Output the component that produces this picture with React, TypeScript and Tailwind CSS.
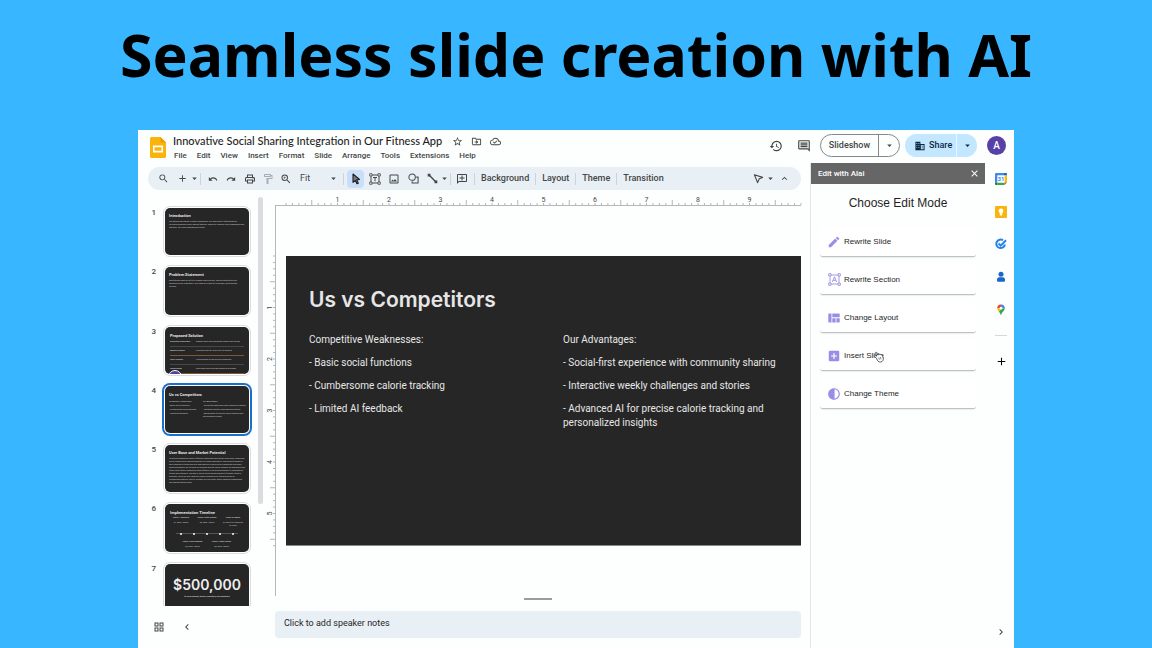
import type { ReactNode } from "react";
import {
  MdAdd,
  MdAddBox,
  MdArrowDropDown,
  MdChevronLeft,
  MdChevronRight,
  MdClose,
  MdContrast,
  MdCreate,
  MdExpandLess,
  MdHistory,
  MdOutlineAddComment,
  MdOutlineCloudDone,
  MdOutlineComment,
  MdOutlineDriveFileMove,
  MdOutlineFormatPaint,
  MdOutlineGridView,
  MdOutlineImage,
  MdOutlinePrint,
  MdRedo,
  MdSearch,
  MdStarBorder,
  MdUndo,
  MdZoomIn,
} from "react-icons/md";

const menus = ["File", "Edit", "View", "Insert", "Format", "Slide", "Arrange", "Tools", "Extensions", "Help"];

function ToolButton({ label, className = "", children }: { label: string; className?: string; children: ReactNode }) {
  return (
    <button aria-label={label} className={`flex shrink-0 items-center justify-center ${className}`}>
      {children}
    </button>
  );
}

function Divider() {
  return <span className="h-3 w-px shrink-0 bg-[#cdd3d9]" />;
}

function SlidesLogo() {
  return (
    <svg viewBox="0 0 16 21" className="h-[21px] w-4 shrink-0" aria-hidden="true">
      <path d="M1.500 0H10.500L16 5.500V19.500A1.500 1.500 0 0 1 14.500 21H1.500A1.500 1.500 0 0 1 0 19.500V1.500A1.500 1.500 0 0 1 1.500 0Z" fill="#fbb40b" />
      <path d="M10.500 0L16 5.500H10.500Z" fill="#f09a00" />
      <path d="M3 8.500H13V15.500H3ZM4.500 10.300V13.700H11.500V10.300Z" fill="#fff" fillRule="evenodd" />
    </svg>
  );
}

function Header() {
  return (
    <header className="flex h-[33px] shrink-0 items-start pr-2 pl-3 text-[#444746]">
      <div className="pt-[7px]">
        <SlidesLogo />
      </div>
      <div className="ml-[7px] pt-1">
        <div className="flex h-[14px] items-center">
          <h2 className="font-[Lato,sans-serif] text-[11px] leading-[14px] font-medium whitespace-nowrap text-[#1f1f1f]">
            Innovative Social Sharing Integration in Our Fitness App
          </h2>
          <button aria-label="Star" className="ml-[10px]"><MdStarBorder size={11} /></button>
          <button aria-label="Move" className="ml-2"><MdOutlineDriveFileMove size={11} /></button>
          <button aria-label="Saved to Drive" className="ml-2"><MdOutlineCloudDone size={11} /></button>
        </div>
        <nav className="flex h-4 items-center gap-[10px] pl-px text-[8px] font-medium">
          {menus.map((m) => (
            <button key={m}>{m}</button>
          ))}
        </nav>
      </div>
      <div className="ml-auto flex items-center pt-1">
        <button aria-label="Version history"><MdHistory size={14} /></button>
        <button aria-label="Comments" className="ml-[14px]"><MdOutlineComment size={14} /></button>
        <div className="ml-[9px] flex h-[23px] w-20 rounded-full border border-[#85888b]">
          <button className="flex-1 border-r border-[#85888b] text-[9px] font-medium">Slideshow</button>
          <button aria-label="Slideshow options" className="flex w-5 items-center justify-center"><MdArrowDropDown size={11} /></button>
        </div>
        <div className="ml-[5px] flex h-[23px] w-[72px] rounded-full bg-[#c2e7ff] text-[#0b2a44]">
          <button className="flex flex-1 items-center gap-1 border-r border-[#e8f6ff] pl-[10px] text-[9px] font-medium">
            <svg viewBox="0 0 12 12" width="10" height="10" fill="currentColor" aria-hidden="true">
              <path d="M.5 1H6.500V3.500H11.500V11H.5ZM7 4.700V9.800H10.300V4.700ZM1.700 2.500V3.500H2.700V2.500ZM4.200 2.500V3.500H5.200V2.500ZM1.700 5V6H2.700V5ZM4.200 5V6H5.200V5ZM1.700 7.500V8.500H2.700V7.500ZM4.200 7.500V8.500H5.200V7.500Z" fillRule="evenodd" />
              <path d="M8 5.700H9.300V6.700H8ZM8 7.800H9.300V8.800H8Z" />
            </svg>
            Share
          </button>
          <button aria-label="Share options" className="flex w-5 items-center justify-center"><MdArrowDropDown size={11} /></button>
        </div>
        <button className="ml-[10px] h-[19px] w-[19px] rounded-full bg-[#5642a6] text-[10px] font-medium text-white">A</button>
      </div>
    </header>
  );
}

function Toolbar() {
  return (
    <div className="mt-1 mr-[9px] ml-[10px] flex h-[23px] shrink-0 items-center rounded-full bg-[#e9f0f5] text-[#444746]">
      <ToolButton label="Search" className="ml-[9px] w-3"><MdSearch size={11} /></ToolButton>
      <ToolButton label="New slide" className="ml-[7px] w-3"><MdAdd size={11} /></ToolButton>
      <ToolButton label="New slide options" className="w-3"><MdArrowDropDown size={11} /></ToolButton>
      <Divider />
      <ToolButton label="Undo" className="ml-[6px] w-3"><MdUndo size={10} /></ToolButton>
      <ToolButton label="Redo" className="ml-[6px] w-3"><MdRedo size={10} /></ToolButton>
      <ToolButton label="Print" className="ml-[7px] w-3"><MdOutlinePrint size={12} /></ToolButton>
      <ToolButton label="Paint format" className="ml-[6px] w-3 text-[#a9adb1]"><MdOutlineFormatPaint size={12} /></ToolButton>
      <ToolButton label="Zoom" className="ml-[6px] w-3"><MdZoomIn size={12} /></ToolButton>
      <button className="ml-2 flex w-[39px] items-center justify-between text-[9px]">Fit<MdArrowDropDown size={11} /></button>
      <span className="w-1" />
      <Divider />
      <ToolButton label="Select" className="ml-[3px] h-[18px] w-[17px] rounded-sm bg-[#c9defa]">
        <svg viewBox="0 0 12 12" width="12" height="12"><path d="M3 1L9.500 6.500L6.800 6.900L8.300 10.200L6.900 10.800L5.400 7.500L3 9.300Z" fill="#777b80" stroke="#1f1f1f" strokeWidth="1.100" strokeLinejoin="round" /></svg>
      </ToolButton>
      <ToolButton label="Text box" className="ml-[5px] w-3">
        <svg viewBox="0 0 12 12" width="12" height="12" fill="none" stroke="currentColor"><path d="M2 2H10V10H2Z" /><path d="M.7.700H3V3H.7ZM9 .7H11.300V3H9ZM.7 9H3V11.300H.7ZM9 9H11.300V11.300H9Z" fill="#e9f0f5" strokeWidth=".8" /><path d="M4 4.500H8M6 4.500V8.300" /></svg>
      </ToolButton>
      <ToolButton label="Image" className="ml-[7px] w-3"><MdOutlineImage size={12} /></ToolButton>
      <ToolButton label="Shape" className="ml-[7px] w-3">
        <svg viewBox="0 0 12 12" width="11" height="11" fill="none" stroke="currentColor" strokeWidth="1.100"><circle cx="4.500" cy="4.500" r="3.500" /><path d="M9 4.500H11V11H4.500V9" /></svg>
      </ToolButton>
      <ToolButton label="Line" className="ml-[7px] w-3">
        <svg viewBox="0 0 12 12" width="11" height="11" fill="none" stroke="currentColor" strokeWidth="1.500"><path d="M2 2L10 10" /><path d="M1.500 1.500H3V3H1.500ZM9 9H10.500V10.500H9Z" /></svg>
      </ToolButton>
      <ToolButton label="Line options" className="w-3"><MdArrowDropDown size={11} /></ToolButton>
      <Divider />
      <ToolButton label="Comment" className="ml-[5px] w-3"><MdOutlineAddComment size={12} className="-scale-x-100" /></ToolButton>
      <span className="w-[6px]" />
      <Divider />
      <div className="flex items-center gap-[6px] pl-[6px] text-[9px] font-medium">
        <button>Background</button>
        <Divider />
        <button>Layout</button>
        <Divider />
        <button>Theme</button>
        <Divider />
        <button>Transition</button>
      </div>
      <ToolButton label="Pointer mode" className="ml-auto w-3">
        <svg viewBox="0 0 12 12" width="11" height="11" fill="none" stroke="currentColor" strokeWidth="1.200"><path d="M1.500 2L10.500 4.800L6.800 6.300L5 10.500Z" strokeLinejoin="round" /></svg>
      </ToolButton>
      <ToolButton label="Pointer options" className="w-3"><MdArrowDropDown size={11} /></ToolButton>
      <ToolButton label="Hide the menus" className="mr-[11px] ml-[2px] w-3"><MdExpandLess size={11} /></ToolButton>
    </div>
  );
}

function Solution() {
  const rows = [
    ["Connected Challenges", "Engage users with challenges shared with friends"],
    ["Machine Guided", "Personal plans for every level of workout"],
    ["Share Content", "Post progress to stories and community"],
    ["Add Rewards", "Encourage users through badges and streaks"],
  ];
  return (
    <div className="flex h-full flex-col px-[5px] pt-[6px]">
      <p className="text-[4px] leading-[5px] font-semibold">Proposed Solution</p>
      {rows.map(([a, b], i) => (
        <div key={a} className={`flex h-[9px] shrink-0 items-center border-b text-[2px] leading-[3px] text-[#ccc] ${i % 2 ? "border-[#80572e]" : "border-[#484848]"}`}>
          <b className="w-[26px]">{a}</b>
          <span>{b}</span>
        </div>
      ))}
      <span className="absolute -bottom-[10px] left-[3px] h-[14px] w-[14px] rounded-full border border-white bg-[#5642a6]" />
    </div>
  );
}

function Timeline() {
  return (
    <div className="px-[5px] pt-[6px] text-center text-[2px] leading-[3px] text-[#ccc]">
      <p className="text-left text-[4px] leading-[5px] font-semibold text-[#eee]">Implementation Timeline</p>
      <div className="mt-px grid grid-cols-3 gap-x-1"><b>Phase 1 Research</b><b>Phase 3 Beta Testing</b><b>Phase 5 Launch</b></div>
      <div className="mt-[2px] grid h-[7px] grid-cols-3 gap-x-1"><span>Q1 2025 - March</span><span>Q3 2025 - March</span><span>Q4 2025 full release to all users</span></div>
      <div className="mx-[6px] my-1 flex h-[3px] items-center justify-between bg-[linear-gradient(#555,#555)] bg-[length:100%_1px] bg-center bg-no-repeat px-1">
        {[0, 1, 2, 3, 4].map((n) => <i key={n} className="h-[2px] w-[2px] rounded-full bg-white" />)}
      </div>
      <div className="mx-2 mt-[5px] grid grid-cols-2"><b>Phase 2 Development</b><b>Phase 4 Beta Testing</b></div>
      <div className="mx-2 mt-[2px] grid grid-cols-2"><span>Q2 2025 - March</span><span>Q3 2025 - March</span></div>
    </div>
  );
}

function TextThumb({ title, body }: { title: string; body: string }) {
  return (
    <div className="px-1 pt-[5px]">
      <p className="text-[4px] leading-[5px] font-semibold">{title}</p>
      <p className="mt-[2px] text-[2px] leading-[3px] text-[#ccc]">{body}</p>
    </div>
  );
}

const slides: { id: number; content: ReactNode }[] = [
  { id: 1, content: <TextThumb title="Introduction" body="The fitness app market is highly competitive. Our app aims to differentiate by including seamless social sharing features. These will improve user engagement and retention. Our users motivate each other." /> },
  { id: 2, content: <TextThumb title="Problem Statement" body="Most fitness apps do not fully engage users socially, lacking interactivity and seamless social integration. This leads to a need for a dynamic, personalized solution." /> },
  { id: 3, content: <Solution /> },
  {
    id: 4,
    content: (
      <div className="pt-[6px] pl-1 text-[2px] leading-[3px] text-[#ccc]">
        <p className="text-[4px] leading-[5px] font-semibold text-[#eee]">Us vs Competitors</p>
        <div className="mt-[3px] grid grid-cols-[34px_1fr] whitespace-nowrap">
          <div className="space-y-px"><p>Competitive Weaknesses:</p><p>- Basic social functions</p><p>- Cumbersome calorie tracking</p><p>- Limited AI feedback</p></div>
          <div className="space-y-px"><p>Our Advantages:</p><p>- Social-first experience with community sharing</p><p>- Interactive weekly challenges and stories</p><p>- Advanced AI for precise calorie tracking and<br />personalized insights</p></div>
        </div>
      </div>
    ),
  },
  { id: 5, content: <TextThumb title="User Base and Market Potential" body="Joining an expanding sector of fitness enthusiasts and casual users alike, combining social, tracking and sharing elements in a single application. The group of people in their twenties to forties who are motivated by a more social component and share health milestones. By focusing on progress and the social element, an emerging trend of the social fitness experience where fitness is social and progress is celebrated by friends and strangers. The app is valued at the growing market of healthy lifestyle products. There are also ideas for organic promotion by friends and social communities that are likely to increase our user base, which supports engagement and reaches fitness goals." /> },
  { id: 6, content: <Timeline /> },
  {
    id: 7,
    content: (
      <div className="pt-3 text-center">
        <p className="font-['Inter',sans-serif] text-[14px] leading-[17px] font-semibold">$500,000</p>
        <p className="mt-[2px] text-[2px] leading-[3px]">for development, testing, marketing, and operations</p>
      </div>
    ),
  },
];

function Filmstrip() {
  return (
    <aside className="flex w-[126px] shrink-0 flex-col pr-px">
      <div className="mt-[7px] flex min-h-0 flex-1">
        <ol className="flex min-w-0 flex-1 flex-col gap-2 overflow-hidden pt-[9px]">
          {slides.map((s) => (
            <li key={s.id} className="flex shrink-0">
              <span className="w-[18px] shrink-0 pt-[2px] text-right text-[8px] leading-[10px] font-medium text-[#444746]">{s.id}</span>
              <button
                aria-label={`Slide ${s.id}`}
                className={`ml-[7px] w-[88px] rounded-[7px] border bg-white p-px ${s.id === 4 ? "border-[#1a6fc9] ring-1 ring-[#1a6fc9]" : "border-[#dadce0]"}`}
              >
                <div className="relative aspect-video overflow-hidden rounded-[5px] bg-[#262626] text-left text-[#eee]">
                  {s.content}
                </div>
              </button>
            </li>
          ))}
        </ol>
        <span className="mb-[102px] ml-[6px] w-[5px] rounded-full bg-[#dadce0]" />
      </div>
      <div className="flex h-[42px] shrink-0 items-center gap-4 pl-[15px] text-[#444746]">
        <button aria-label="Grid view"><MdOutlineGridView size={12} /></button>
        <button aria-label="Hide filmstrip"><MdChevronLeft size={12} /></button>
      </div>
    </aside>
  );
}

function ruler(count: number) {
  return Array.from({ length: count }, (_, i) => i);
}

function TopRuler() {
  return (
    <svg viewBox="0 0 515 12" className="ml-[11px] block w-full shrink overflow-visible" aria-label="Horizontal ruler">
      {ruler(81).map((i) => (
        <path key={i} d={`M${i * 6.4375} 12V${i % 8 === 4 ? 7 : 10}`} stroke="#a0a3a6" strokeWidth=".8" />
      ))}
      {ruler(9).map((i) => (
        <text key={i} x={(i + 1) * 51.5} y="9" textAnchor="middle" fontSize="7" fill="#444746">{i + 1}</text>
      ))}
    </svg>
  );
}

function SideRuler() {
  return (
    <svg viewBox="0 0 11 290" className="h-[290px] w-[11px] overflow-visible" aria-label="Vertical ruler">
      {ruler(46).map((i) => (
        <path key={i} d={`M11 ${i * 6.4375}H${i % 8 === 4 ? 6 : 9}`} stroke="#a0a3a6" strokeWidth=".8" />
      ))}
      {ruler(5).map((i) => (
        <text key={i} transform={`translate(8 ${(i + 1) * 51.5}) rotate(-90)`} textAnchor="middle" fontSize="7" fill="#444746">{i + 1}</text>
      ))}
    </svg>
  );
}

function Canvas() {
  return (
    <section className="flex min-w-0 flex-1 flex-col pr-[9px]">
      <div className="ml-[11px] flex h-4 items-end border-b border-[#b5b8bb] pt-1">
        <TopRuler />
      </div>
      <div className="flex min-h-0 flex-1">
        <div className="mb-[9px] w-3 shrink-0 border-r border-[#b5b8bb] pt-[50px]">
          <SideRuler />
        </div>
        <div className="flex min-w-0 flex-1 flex-col pt-[50px] pl-[10px]">
          <article className="h-[290px] border-b border-[#888] bg-[#262626] px-[23px] pt-[31px] text-[#e6e6e6]">
            <h3 className="font-['Inter',sans-serif] text-[21px] leading-[26px] font-semibold">Us vs Competitors</h3>
            <div className="mt-5 grid grid-cols-[254px_1fr] text-[10px] leading-[14px]">
              <div className="space-y-[9px]">
                <p>Competitive Weaknesses:</p>
                <p>- Basic social functions</p>
                <p>- Cumbersome calorie tracking</p>
                <p>- Limited AI feedback</p>
              </div>
              <div className="space-y-[9px]">
                <p>Our Advantages:</p>
                <p className="whitespace-nowrap">- Social-first experience with community sharing</p>
                <p>- Interactive weekly challenges and stories</p>
                <p>- Advanced AI for precise calorie tracking and<br />personalized insights</p>
              </div>
            </div>
          </article>
          <span className="mt-auto mr-[11px] mb-[5px] h-[2px] w-7 self-center bg-[#9a9da0]" />
        </div>
      </div>
      <div className="mt-[6px] mb-[10px] ml-[11px] h-[27px] shrink-0 rounded bg-[#e9f0f5]">
        <input
          aria-label="Speaker notes"
          placeholder="Click to add speaker notes"
          className="block h-6 w-full bg-transparent px-[9px] text-[9px] placeholder:text-[#1f1f1f]"
        />
      </div>
    </section>
  );
}

function SectionIcon() {
  return (
    <svg viewBox="0 0 13 13" width="13" height="13" fill="none" stroke="currentColor" strokeWidth=".9">
      <path d="M2 2H11V11H2Z" />
      <path d="M.7.700H3V3H.7ZM10 .7H12.300V3H10ZM.7 10H3V12.300H.7ZM10 10H12.300V12.300H10Z" fill="#fff" />
      <path d="M4.300 9L6.500 3.800L8.700 9M5.100 7.300H7.900" />
    </svg>
  );
}

function LayoutIcon() {
  return (
    <svg viewBox="0 0 12 10" width="12" height="10" fill="currentColor">
      <path d="M1 .5H3.500V9.500H1A.7.7 0 0 1 .3 8.800V1.200A.7.7 0 0 1 1 .5ZM4.300.500H11A.7.7 0 0 1 11.700 1.200V4.300H4.300ZM4.300 5.200H7.600V9.500H4.300ZM8.400 5.200H11.700V8.800A.7.7 0 0 1 11 9.500H8.400Z" />
    </svg>
  );
}

function HandCursor() {
  return (
    <svg viewBox="0 0 12 12" className="absolute top-[10px] left-[53px] h-3 w-3" aria-hidden="true">
      <path d="M3.600 7.500L1.500 5.300C.8 4.500 1.600 3.800 2.400 4.300L3.700 5.200L2.600 2C2.400 1.100 3.500.8 3.800 1.600L4.900 4.200L5.300 3.300C5.800 2.700 6.400 3 6.500 3.700C7 3.100 7.800 3.300 8 4.100C8.600 3.700 9.300 4 9.500 4.700L10.300 7.200C10.500 9 9.600 10.800 7.600 11C5.600 11.200 4.600 10.200 3.600 7.500Z" fill="#fff" stroke="#333" strokeWidth=".8" />
      <path d="M5.700 6.500L6.400 8.700M7.300 6L8 8.300" stroke="#333" strokeWidth=".6" />
    </svg>
  );
}

const modes: { label: string; icon: ReactNode; hovered?: boolean }[] = [
  { label: "Rewrite Slide", icon: <MdCreate size={14} /> },
  { label: "Rewrite Section", icon: <SectionIcon /> },
  { label: "Change Layout", icon: <LayoutIcon /> },
  { label: "Insert Slide", icon: <MdAddBox size={14} />, hovered: true },
  { label: "Change Theme", icon: <MdContrast size={14} /> },
];

function EditPanel() {
  return (
    <aside className="flex w-[175px] shrink-0 flex-col border-l border-[#e3e5e8] font-['Liberation_Sans',sans-serif]">
      <div className="flex h-[21px] shrink-0 items-center justify-between bg-[#666] pr-[5px] pl-[7px] text-white">
        <h3 className="font-[Roboto,sans-serif] text-[8px] font-medium">Edit with Alai</h3>
        <button aria-label="Close"><MdClose size={11} /></button>
      </div>
      <h2 className="mt-[11px] text-center text-[12px] leading-4 text-[#1f1f1f]">Choose Edit Mode</h2>
      <div className="mx-[9px] mt-4 flex flex-col gap-2">
        {modes.map((m) => (
          <button key={m.label} className="relative flex h-[30px] items-center rounded-[3px] border-b border-[#bfc1c4] bg-white pl-2 text-[8px] text-[#1f1f1f] shadow-[0_1px_1px_#0001]">
            <span className="mr-1 flex w-3 shrink-0 items-center justify-center text-[#988ee6] *:shrink-0">{m.icon}</span>
            {m.label}
            {m.hovered && <HandCursor />}
          </button>
        ))}
      </div>
    </aside>
  );
}

function SideRail() {
  return (
    <aside className="flex w-[29px] shrink-0 flex-col items-center pt-[9px] pl-[3px]">
      <button aria-label="Calendar" className="h-[13px]">
        <svg viewBox="0 0 12 12" width="12" height="12"><path d="M1 0H9V2.500H2.500V9.500H0V1A1 1 0 0 1 1 0Z" fill="#4285f4" /><path d="M9 0H11A1 1 0 0 1 12 1V2.500H9Z" fill="#1967d2" /><path d="M9.500 2.500H12V9.500H9.500Z" fill="#fbbc04" /><path d="M2.500 9.500H9.500V12H2.500Z" fill="#34a853" /><path d="M0 9.500H2.500V12H1A1 1 0 0 1 0 11Z" fill="#188038" /><path d="M9.500 9.500H12L9.500 12Z" fill="#ea4335" /><path d="M2.500 2.500H9.500V9.500H2.500Z" fill="#fff" /><text x="6" y="8.200" textAnchor="middle" fontSize="6" fill="#4285f4" fontWeight="bold">31</text></svg>
      </button>
      <button aria-label="Keep" className="mt-5 h-[13px]">
        <svg viewBox="0 0 12 12" width="12" height="12"><rect width="12" height="12" rx="1" fill="#fbb40b" /><circle cx="6" cy="5" r="2.400" fill="#fff" /><path d="M4.800 7H7.200V9.500H4.800Z" fill="#fff" /></svg>
      </button>
      <button aria-label="Tasks" className="mt-[19px] h-[13px]">
        <svg viewBox="0 0 12 12" width="12" height="12" fill="none" stroke="#2684e8" strokeWidth="2"><path d="M8 2.200A4.300 4.300 0 1 0 9.900 6.500" /><path d="M3.500 5.500L5.700 7.700L11 2.300" /></svg>
      </button>
      <button aria-label="Contacts" className="mt-5 h-[13px]">
        <svg viewBox="0 0 12 12" width="12" height="12" fill="#1967c8"><circle cx="6" cy="3.200" r="2.500" /><path d="M2 8A2.300 2.300 0 0 1 4.300 6.300H7.700A2.300 2.300 0 0 1 10 8.500V9.500A1.200 1.200 0 0 1 8.800 10.700H3.200A1.200 1.200 0 0 1 2 9.500Z" /></svg>
      </button>
      <button aria-label="Maps" className="mt-5 h-[13px]">
        <svg viewBox="0 0 12 12" width="12" height="12"><path d="M6 .5A3.800 3.800 0 0 0 2.200 4.300L6 4.300Z" fill="#ea4335" /><path d="M6 .5A3.800 3.800 0 0 1 9.800 4.300H6Z" fill="#4285f4" /><path d="M2.200 4.300C2.200 5.800 3 6.600 3.900 7.700L7 4.300Z" fill="#fbbc04" /><path d="M9.800 4.300C9.800 7 6.700 8 6 11.500C5.600 9.800 4.800 8.700 3.900 7.700L7 4.300Z" fill="#34a853" /><circle cx="6" cy="4.200" r="1.400" fill="#fff" /></svg>
      </button>
      <span className="mt-[19px] h-px w-3 bg-[#d5d7da]" />
      <button aria-label="Get add-ons" className="mt-[19px]"><MdAdd size={13} /></button>
      <button aria-label="Hide side panel" className="mt-auto mb-[10px] text-[#444746]"><MdChevronRight size={12} /></button>
    </aside>
  );
}

export default function App() {
  return (
    <main className="flex h-screen min-h-[648px] flex-col overflow-hidden bg-[#38b6ff] font-[Roboto,sans-serif]">
      <h1 className="flex h-[130px] shrink-0 justify-center pt-[14px] font-['Noto_Sans',sans-serif] text-[59px] leading-[80px] font-bold whitespace-nowrap text-black">
        Seamless slide creation with AI
      </h1>
      <div className="mx-[138px] flex min-h-0 flex-1 flex-col bg-[#fdfefe]">
        <Header />
        <div className="flex min-h-0 flex-1">
          <div className="flex min-w-0 flex-1 flex-col">
            <Toolbar />
            <div className="flex min-h-0 flex-1">
              <Filmstrip />
              <Canvas />
            </div>
          </div>
          <EditPanel />
          <SideRail />
        </div>
      </div>
    </main>
  );
}
